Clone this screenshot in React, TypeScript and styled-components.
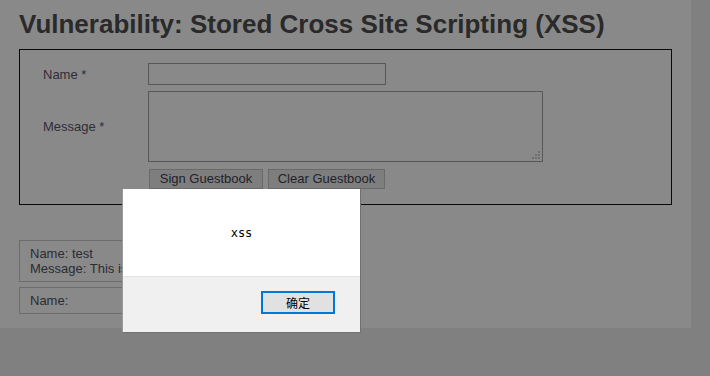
import * as React from "react";
import styled, { createGlobalStyle } from "styled-components";

const GlobalStyle = createGlobalStyle`
  html, body {
    margin: 0;
    padding: 0;
    background: #808080;
  }
  body {
    font-family: "Liberation Sans", Arial, sans-serif;
    overflow: hidden;
  }
`;

const Screen = styled.div`
  position: relative;
  width: 710px;
  height: 376px;
  background: #808080;
`;

const Main = styled.div`
  width: 672px;
  height: 328px;
  padding: 0 0 0 19px;
  background: #898989;
  box-sizing: content-box;
  overflow: hidden;
`;

const Title = styled.h1`
  margin: 0;
  padding-top: 9px;
  height: 40px;
  font-size: 26px;
  line-height: 30px;
  font-weight: bold;
  color: #2a2a2a;
  white-space: nowrap;
`;

const FormBox = styled.div`
  width: 653px;
  height: 156px;
  box-sizing: border-box;
  border: 1px solid #0a0a0a;
  padding: 13px 0 0 23px;
`;

const FormGrid = styled.div`
  display: grid;
  grid-template-columns: 105px auto;
  row-gap: 6px;
  align-items: center;
`;

const Label = styled.div`
  font-size: 13px;
  color: #302d3a;
`;

const TextInput = styled.div`
  width: 238px;
  height: 22px;
  box-sizing: border-box;
  border: 1px solid #585858;
`;

const TextArea = styled.div`
  position: relative;
  width: 395px;
  height: 71px;
  box-sizing: border-box;
  border: 1px solid #585858;
`;

const Grip = styled.svg`
  position: absolute;
  right: 1px;
  bottom: 1px;
`;

const Buttons = styled.div`
  grid-column: 2;
  display: flex;
  gap: 5px;
  padding: 1px 0 0 1px;
`;

const Button = styled.div<{ $w: number }>`
  width: ${(p) => p.$w}px;
  height: 20px;
  box-sizing: border-box;
  border: 1px solid #6a6a6a;
  background: #7e7e7e;
  font-size: 13px;
  line-height: 18px;
  color: #22222a;
  text-align: center;
`;

const Entries = styled.div`
  display: flex;
  flex-direction: column;
  gap: 5px;
  margin-top: 35px;
`;

const Entry = styled.div`
  width: 320px;
  box-sizing: border-box;
  border: 1px solid #6c6c6c;
  padding: 5px 10px;
  font-size: 13px;
  line-height: 15px;
  color: #2b2b33;
  white-space: nowrap;
`;

const Dialog = styled.div`
  position: absolute;
  left: 122px;
  top: 189px;
  width: 239px;
  height: 144px;
  box-sizing: border-box;
  border-right: 1px solid #707070;
  border-bottom: 1px solid #707070;
  border-left: 1px solid #9a9a9a;
  display: flex;
  flex-direction: column;
  background: #f0f0f0;
`;

const DialogBody = styled.div`
  height: 88px;
  background: #ffffff;
  border-bottom: 1px solid #e4e4e4;
  display: flex;
  align-items: center;
  justify-content: center;
  box-sizing: border-box;
  font-family: "DejaVu Sans Mono", "Liberation Mono", monospace;
  font-size: 12px;
  color: #000;
`;

const DialogFooter = styled.div`
  flex: 1;
  display: flex;
  justify-content: flex-end;
  padding: 14px 25px 0 0;
`;

const OkButton = styled.div`
  width: 74px;
  height: 23px;
  box-sizing: border-box;
  border: 2px solid #0078d7;
  background: #e1e1e1;
  font-family: "Noto Sans CJK SC", sans-serif;
  font-size: 12px;
  line-height: 19px;
  text-align: center;
  color: #000;
`;

const App = () => {
  return (
    <Screen>
      <GlobalStyle />
      <Main>
        <Title>Vulnerability: Stored Cross Site Scripting (XSS)</Title>
        <FormBox>
          <FormGrid>
            <Label>Name *</Label>
            <TextInput />
            <Label>Message *</Label>
            <TextArea>
              <Grip width="9" height="9" viewBox="0 0 9 9">
                <g fill="#6e6e6e">
                  <rect x="6" y="0" width="2" height="2" />
                  <rect x="3" y="3" width="2" height="2" />
                  <rect x="6" y="3" width="2" height="2" />
                  <rect x="0" y="6" width="2" height="2" />
                  <rect x="3" y="6" width="2" height="2" />
                  <rect x="6" y="6" width="2" height="2" />
                </g>
              </Grip>
            </TextArea>
            <Buttons>
              <Button $w={114}>Sign Guestbook</Button>
              <Button $w={117}>Clear Guestbook</Button>
            </Buttons>
          </FormGrid>
        </FormBox>
        <Entries>
          <Entry>
            Name: test
            <br />
            Message: This is a test comment.
          </Entry>
          <Entry>Name: </Entry>
        </Entries>
      </Main>
      <Dialog>
        <DialogBody>xss</DialogBody>
        <DialogFooter>
          <OkButton>确定</OkButton>
        </DialogFooter>
      </Dialog>
    </Screen>
  );
};

export default App;
